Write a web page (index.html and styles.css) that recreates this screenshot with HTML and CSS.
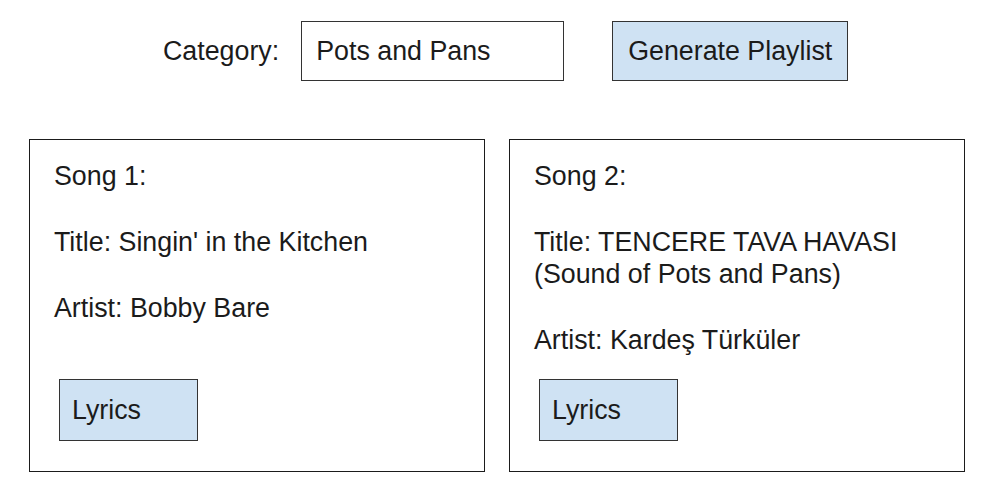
FILE: index.html
```html
<!DOCTYPE html>
<html lang="en">
<head>
  <meta charset="UTF-8" />
  <meta name="viewport" content="width=device-width, initial-scale=1.0"/>
  <title>Playlist Generator</title>
  <link rel="stylesheet" href="styles.css">
</head>
<body>

  <div class="search-row">
    <label class="search-label" for="category">Category:</label>
    <input class="search-input" id="category" type="text" value="Pots and Pans">
    <button class="btn btn-generate">Generate Playlist</button>
  </div>

  <div class="songs">
    <div class="song-card">
      <p class="song-line">Song 1:</p>
      <p class="song-line">Title: Singin' in the Kitchen</p>
      <p class="song-line">Artist: Bobby Bare</p>
      <button class="btn btn-lyrics">Lyrics</button>
    </div>
    <div class="song-card">
      <p class="song-line">Song 2:</p>
      <p class="song-line">Title: TENCERE TAVA HAVASI (Sound of Pots and Pans)</p>
      <p class="song-line">Artist: Kardeş Türküler</p>
      <button class="btn btn-lyrics">Lyrics</button>
    </div>
  </div>

</body>
</html>
```

FILE: styles.css
```css
* {
  margin: 0;
  padding: 0;
  box-sizing: border-box;
}

body {
  background: #fff;
  font-family: "Liberation Sans", Arial, sans-serif;
  font-size: 26.8px;
  color: #1b1b1b;
}

.search-row {
  display: flex;
  align-items: center;
  padding: 21px 0 0 163px;
}

.search-label {
  line-height: 60px;
  margin-right: 22px;
}

.search-input {
  width: 263px;
  height: 60px;
  padding: 0 14px;
  border: 1px solid #333;
  font: inherit;
  color: inherit;
  outline: none;
}

.btn {
  font: inherit;
  color: inherit;
  text-align: left;
  white-space: nowrap;
  background: #cfe2f3;
  border: 1px solid #333;
  cursor: pointer;
}

.btn-generate {
  width: 236px;
  height: 60px;
  margin-left: 48px;
  padding: 0 15px;
}

.songs {
  display: flex;
  gap: 24px;
  margin-top: 58px;
  padding-left: 29px;
}

.song-card {
  width: 456px;
  height: 333px;
  border: 1px solid #1b1b1b;
  padding: 20px 24px 30px 24px;
  display: flex;
  flex-direction: column;
  align-items: flex-start;
}

.song-line {
  line-height: 32px;
  margin-bottom: 34px;
}

.song-line:last-of-type {
  margin-bottom: 0;
}

.btn-lyrics {
  margin-top: auto;
  margin-left: 5px;
  width: 139px;
  height: 62px;
  padding: 0 12px;
  line-height: 60px;
}
```
